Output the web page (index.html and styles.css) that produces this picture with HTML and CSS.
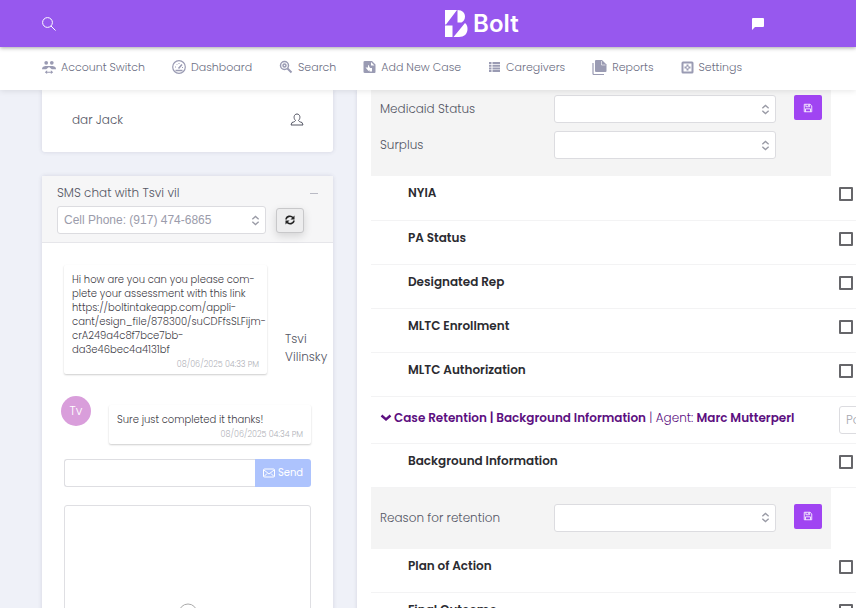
FILE: index.html
```html
<!DOCTYPE html>
<html lang="en">
<head>
<meta charset="utf-8">
<meta name="viewport" content="width=device-width, initial-scale=1">
<title>Bolt</title>
<link rel="stylesheet" href="styles.css">
</head>
<body>
<svg class="sprite" aria-hidden="true">
  <symbol id="updown" viewBox="0 0 10 12"><path d="M1.500 4.500 5 1.500l3.500 3M1.500 7.500l3.500 3 3.500-3" fill="none" stroke="currentColor" stroke-width="1.500"/></symbol>
  <symbol id="save" viewBox="0 0 12 12"><path d="M1.500 1.500h7l2 2v7h-9zM3.500 1.500v3h4.500v-3M3 10.500V7h6v3.500M6.500 2v1.500" fill="none" stroke="currentColor"/></symbol>
</svg>

<header class="topbar">
  <div class="topbar-left">
    <button class="icon-btn" type="button" aria-label="Search"><svg width="14" height="14" viewBox="0 0 14 14"><circle cx="5.500" cy="5.500" r="4.900" fill="none" stroke="currentColor"/><path d="M9 9l4.500 4.500" stroke="currentColor"/></svg></button>
  </div>
  <a class="logo" href="#"><svg width="23" height="27" viewBox="0 0 23 27" fill="currentColor"><path d="M0 0h12L1 14.500H0zM12.500 0c5 0 7.500 3 7.500 6.500 0 3-1.500 5-3.500 6H12.500zM0 15.500h7.500V27H0zM20 13c2 1.500 2.500 3.500 2.500 6 0 5-3.500 8-8.500 8H8.500z"/></svg><span>Bolt</span></a>
  <button class="icon-btn" type="button" aria-label="Messages"><svg width="12" height="12" viewBox="0 0 12 12" fill="currentColor"><path d="M1 0h10q1 0 1 1v7q0 1-1 1H3l-3 3V1q0-1 1-1z"/></svg></button>
</header>

<nav class="menu">
  <a href="#"><svg width="14" height="15" viewBox="0 0 15 15" fill="currentColor"><circle cx="4.500" cy="2.500" r="2"/><circle cx="10.500" cy="2.500" r="2"/><path d="M0 9.500q0-3 3.500-3.500h8q3.500.500 3.500 3.500h-4.500l-3-2.500-3 2.500z"/><path d="M3 12.500l2.500-2v1.500h4v-1.500l2.500 2-2.500 2v-1.500h-4v1.500z"/></svg>Account Switch</a>
  <a href="#"><svg width="14" height="14" viewBox="0 0 14 14" fill="none" stroke="currentColor"><circle cx="7" cy="7" r="6.300" stroke-width="1.200"/><path d="M3.500 10.500h7M6.500 8.500 10 4.500" stroke-width="1.500"/><path d="M3 7h1M4.500 4l.7.700M7 3v1M10 7.500h1"/></svg>Dashboard</a>
  <a href="#"><svg width="14" height="14" viewBox="0 0 14 14" fill="none" stroke="currentColor"><circle cx="5.500" cy="5.500" r="4" stroke-width="1.500"/><circle cx="5.500" cy="5.500" r="1.500" stroke-width="1.500"/><path d="M8.500 8.500l4 4" stroke-width="2"/></svg>Search</a>
  <a href="#"><svg width="13" height="14" viewBox="0 0 13 14"><path fill="currentColor" fill-rule="evenodd" d="M2 1h7l3.500 3.500V12q0 1-1 1H2q-1.500 0-1.500-1V2q0-1 1.500-1zM8 2v3.500h3.500zM5 5v2.500H2.500L5.500 11l1-1V11.500H9V8H7L5.500 5z"/></svg>Add New Case</a>
  <a href="#"><svg width="13" height="12" viewBox="0 0 13 12" fill="currentColor"><path d="M1 1h2.500v2H1zM4.500 1H12v2H4.500zM1 3.700h2.500v2H1zM4.500 3.700H12v2H4.500zM1 6.400h2.500v2H1zM4.500 6.400H12v2H4.500zM1 9.100h2.500v2H1zM4.500 9.100H12v2H4.500z"/></svg>Caregivers</a>
  <a href="#"><svg width="15" height="15" viewBox="0 0 15 15"><path fill="currentColor" d="M4 0h6l4.500 4.500V11q0 1-1 1H4q-1 0-1-1V1q0-1 1-1z"/><path d="M1 3v10.500q0 1 1 1h10" fill="none" stroke="currentColor" stroke-width="1.200"/><path d="M9.500 1v4h4" fill="none" stroke="#fff" stroke-width=".6"/></svg>Reports</a>
  <a href="#"><svg width="13" height="13" viewBox="0 0 13 13" fill="currentColor"><path fill-rule="evenodd" d="M2 .5h9q1.500 0 1.500 1.500v9q0 1.500-1.500 1.500H2Q.5 12.500.5 11V2Q.5.500 2 .500zM2.500 2.500v8h8v-8z"/><path d="M5.500 3.500h2v2h2v2h-2v2h-2v-2h-2v-2h2z"/><circle cx="6.500" cy="6.500" r="1" fill="#fff"/></svg>Settings</a>
</nav>

<main class="page">
  <div class="side">
    <section class="card person">
      <span>dar Jack</span>
      <svg width="14" height="13" viewBox="0 0 14 13" fill="none" stroke="currentColor"><path d="M5.500 7.500C3 5 4 1 7 1s4 4 1.500 6.500c.5 1 1.500 1.500 3.500 2l1 2.500H1l1-2.500c2-.500 3-1 3.500-2z"/></svg>
    </section>

    <section class="card chat">
      <header class="chat-head">
        <div class="chat-title"><label for="phone">SMS chat with Tsvi vil</label><button class="collapse" type="button" aria-label="Collapse"></button></div>
        <div class="chat-tools">
          <span class="select"><select id="phone"><option>Cell Phone: (917) 474-6865</option></select><svg width="9" height="11"><use href="#updown"/></svg></span>
          <button class="refresh" type="button" aria-label="Refresh"><svg width="10" height="10" viewBox="0 0 10 10"><path d="M1 4.500C1.500 1 6 .3 8 2.700M9 5.500C8.500 9 4 9.700 2 7.300" fill="none" stroke="currentColor" stroke-width="1.600"/><path d="M9.500.500v4h-4zM.5 9.500v-4h4z" fill="currentColor"/></svg></button>
        </div>
      </header>
      <div class="chat-body">
        <div class="message">
          <div class="bubble">
            <p>Hi how are you can you please com-<br>plete your assessment with this link<br>https://boltintakeapp.com/appli-<br>cant/esign_file/878300/suCDFfsSLFijm-<br>crA249a4c8f7bce7bb-<br>da3e46bec4a4131bf</p>
            <time>08/06/2025 04:33 PM</time>
          </div>
          <span class="sender">Tsvi Vilinsky</span>
        </div>
        <div class="message reply">
          <span class="avatar">Tv</span>
          <div class="bubble">
            <p>Sure just completed it thanks!</p>
            <time>08/06/2025 04:34 PM</time>
          </div>
        </div>
        <form class="compose">
          <input type="text" aria-label="Message">
          <button type="button"><svg width="12" height="10" viewBox="0 0 12 10" fill="none" stroke="currentColor"><rect x=".5" y="1" width="11" height="8" rx="1"/><path d="M1 2l5 4 5-4M1 8.500l3-3M11 8.500l-3-3"/></svg>Send</button>
        </form>
        <div class="dropzone"><svg width="20" height="20" viewBox="0 0 20 20" fill="none" stroke="currentColor"><circle cx="10" cy="10" r="9"/><path d="M10 14V6M7 9l3-3 3 3"/></svg></div>
      </div>
    </section>
  </div>

  <section class="card tasks">
    <table>
      <colgroup><col><col class="check-col"></colgroup>
      <tbody>
        <tr class="fields first">
          <td><div class="fields-grid">
            <label for="medicaid">Medicaid Status</label>
            <span class="select"><select id="medicaid"><option></option></select><svg width="9" height="11"><use href="#updown"/></svg></span>
            <button class="save" type="button" aria-label="Save"><svg width="10" height="10"><use href="#save"/></svg></button>
            <label for="surplus">Surplus</label>
            <span class="select"><select id="surplus"><option></option></select><svg width="9" height="11"><use href="#updown"/></svg></span>
          </div></td><td></td>
        </tr>
        <tr class="task"><td><label for="t1">NYIA</label></td><td><input type="checkbox" id="t1"></td></tr>
        <tr class="task"><td><label for="t2">PA Status</label></td><td><input type="checkbox" id="t2"></td></tr>
        <tr class="task"><td><label for="t3">Designated Rep</label></td><td><input type="checkbox" id="t3"></td></tr>
        <tr class="task"><td><label for="t4">MLTC Enrollment</label></td><td><input type="checkbox" id="t4"></td></tr>
        <tr class="task"><td><label for="t5">MLTC Authorization</label></td><td><input type="checkbox" id="t5"></td></tr>
        <tr class="group">
          <td><a href="#"><svg width="12" height="8" viewBox="0 0 12 8"><path d="M1.500 1.500 6 5.500l4.500-4" fill="none" stroke="currentColor" stroke-width="2.400"/></svg><b>Case Retention | Background Information</b> | Agent: <b>Marc Mutterperl</b></a></td>
          <td><input type="text" class="owner" placeholder="Po" aria-label="Owner"></td>
        </tr>
        <tr class="task"><td><label for="t6">Background Information</label></td><td><input type="checkbox" id="t6"></td></tr>
        <tr class="fields">
          <td><div class="fields-grid">
            <label for="reason">Reason for retention</label>
            <span class="select"><select id="reason"><option></option></select><svg width="9" height="11"><use href="#updown"/></svg></span>
            <button class="save" type="button" aria-label="Save"><svg width="10" height="10"><use href="#save"/></svg></button>
          </div></td><td></td>
        </tr>
        <tr class="task"><td><label for="t7">Plan of Action</label></td><td><input type="checkbox" id="t7"></td></tr>
        <tr class="task"><td><label for="t8">Final Outcome</label></td><td><input type="checkbox" id="t8"></td></tr>
      </tbody>
    </table>
  </section>
</main>
</body>
</html>
```

FILE: styles.css
```css
* { box-sizing: border-box; }

body {
  margin: 0;
  height: 100vh;
  overflow: hidden;
  display: flex;
  flex-direction: column;
  background: #eff1f8;
  color: #555765;
  font: 300 12px/18px Poppins, Inter, sans-serif;
}

button, input, select { font: inherit; color: inherit; margin: 0; }
button { padding: 0; border: 0; background: none; }
a { color: inherit; text-decoration: none; }
svg { display: block; flex: none; }
p { margin: 0; }
.sprite { position: absolute; width: 0; height: 0; }

.topbar {
  flex: none;
  display: grid;
  grid-template-columns: 52% 1fr auto;
  align-items: center;
  height: 47px;
  background: #9758ee;
  color: #fff;
  box-shadow: 0 1px 4px rgba(0, 0, 0, .35);
  z-index: 2;
}
.topbar-left { display: flex; padding-left: 42px; }
.topbar > .icon-btn { margin-right: 92px; }
.logo { display: flex; align-items: center; gap: 5px; font: 600 24px/28px Inter, sans-serif; }

.menu {
  flex: none;
  display: flex;
  align-items: center;
  gap: 27px;
  height: 43px;
  padding: 0 42px 3px;
  background: #fff;
  color: #6c6e83;
  font-size: 11px;
  box-shadow: 0 1px 6px rgba(0, 0, 0, .1);
  white-space: nowrap;
  z-index: 1;
}
.menu a { display: flex; align-items: center; gap: 5px; }
.menu svg { color: #9a9bb3; }

.page {
  flex: 1;
  min-height: 0;
  display: grid;
  grid-template-columns: 291px 1fr;
  gap: 24px;
  padding-left: 42px;
}

.card { background: #fff; box-shadow: 0 0 4px rgba(60, 60, 100, .16); }
.side { display: flex; flex-direction: column; gap: 24px; }

.person {
  display: flex;
  justify-content: space-between;
  align-items: center;
  height: 62px;
  padding: 0 29px 3px 30px;
  border-radius: 0 0 3px 3px;
}

.chat { border-radius: 3px; }
.chat-head { padding: 8px 15px; background: #f6f6f7; border-bottom: 1px solid #e6e6ea; }
.chat-title { display: flex; justify-content: space-between; align-items: center; margin-bottom: 4px; }
.collapse { width: 8px; height: 1px; background: #b9bac4; }
.chat-tools { display: flex; align-items: center; gap: 10px; padding-right: 14px; }
.chat-tools .select { flex: 1; }

.select { display: grid; align-items: center; }
.select > * { grid-area: 1 / 1; }
.select svg { justify-self: end; margin-right: 6px; color: #9a9ba6; pointer-events: none; }
select {
  appearance: none;
  width: 100%;
  height: 28px;
  padding: 0 20px 0 6px;
  border: 1px solid #dcdce0;
  border-radius: 3px;
  background: #fff;
}
#phone { color: #9b9cab; font-family: "Liberation Sans", sans-serif; font-weight: 400; }

.refresh {
  display: grid;
  place-items: center;
  width: 28px;
  height: 25px;
  border: 1px solid #c8c8ca;
  border-radius: 3px;
  background: #ededee;
  color: #222;
  box-shadow: 0 3px 8px rgba(0, 0, 0, .14);
}

.chat-body { padding: 22px; }
.message { display: flex; align-items: flex-end; gap: 18px; margin-right: -20px; }
.bubble {
  width: 203px;
  padding: 8px;
  padding-bottom: 2px;
  border-radius: 2px;
  background: #fff;
  box-shadow: 0 1px 2px rgba(0, 0, 0, .2);
  color: #3f4048;
  font-size: 10px;
  line-height: 14px;
  white-space: nowrap;
}
.bubble time { display: block; color: #b0b1b8; font-size: 8px; line-height: 15px; text-align: right; }
.sender { flex: 1; padding-bottom: 8px; }
.reply { align-items: flex-start; margin: 22px 0 0 -3px; }
.reply .bubble { margin-top: 9px; }
.avatar {
  flex: none;
  width: 30px;
  height: 30px;
  border-radius: 50%;
  background: #d99edb;
  color: #fff;
  line-height: 30px;
  text-align: center;
}

.compose { display: flex; margin-top: 15px; }
.compose input {
  flex: 1;
  min-width: 0;
  height: 28px;
  border: 1px solid #dedee2;
  border-right: 0;
  border-radius: 3px 0 0 3px;
}
.compose button {
  display: flex;
  align-items: center;
  justify-content: center;
  gap: 3px;
  width: 56px;
  border-radius: 0 3px 3px 0;
  background: #adc3fd;
  color: #fff;
  font-size: 10px;
  font-weight: 400;
}
.dropzone {
  display: grid;
  justify-content: center;
  margin-top: 18px;
  padding: 97px 0;
  border: 1px solid #dfdfe3;
  border-radius: 3px;
  color: #aaa;
}

.tasks { padding-left: 14px; overflow: hidden; }
table { width: 100%; table-layout: fixed; border-collapse: collapse; }
.check-col { width: 25px; }
td { padding: 0; vertical-align: top; }

.fields td:first-child { padding: 16px 9px 17px; background: #f4f4f4; }
.first td:first-child { padding-top: 5px; }
.fields-grid {
  display: grid;
  grid-template-columns: 156px 1fr 28px;
  gap: 8px 18px;
  align-items: center;
}
.save {
  display: grid;
  place-items: center;
  align-self: start;
  height: 25px;
  border-radius: 2px;
  background: #a044f2;
  color: #fff;
}

.task { height: 44px; border-bottom: 1px solid #f3f3f4; }
.task label { display: block; padding: 8px 0 0 37px; color: #2b2b30; font-weight: 600; }
input[type="checkbox"] {
  appearance: none;
  display: block;
  width: 14px;
  height: 14px;
  margin: 11px 0 0 8px;
  border: 2px solid #66666a;
  border-radius: 1px;
  background: #fff;
}

.group { height: 47px; border-bottom: 1px solid #f3f3f4; color: #5c0f80; }
.group a { display: block; padding: 12px 0 0 9px; white-space: nowrap; }
.group svg { display: inline-block; margin-right: 2px; }
.group b { font-weight: 600; }
.owner {
  width: 120px;
  height: 28px;
  margin: 9px 0 0 8px;
  padding: 0 6px;
  border: 1px solid #dcdce0;
  border-radius: 3px;
}
.owner::placeholder { color: #a5a6b0; }
```
